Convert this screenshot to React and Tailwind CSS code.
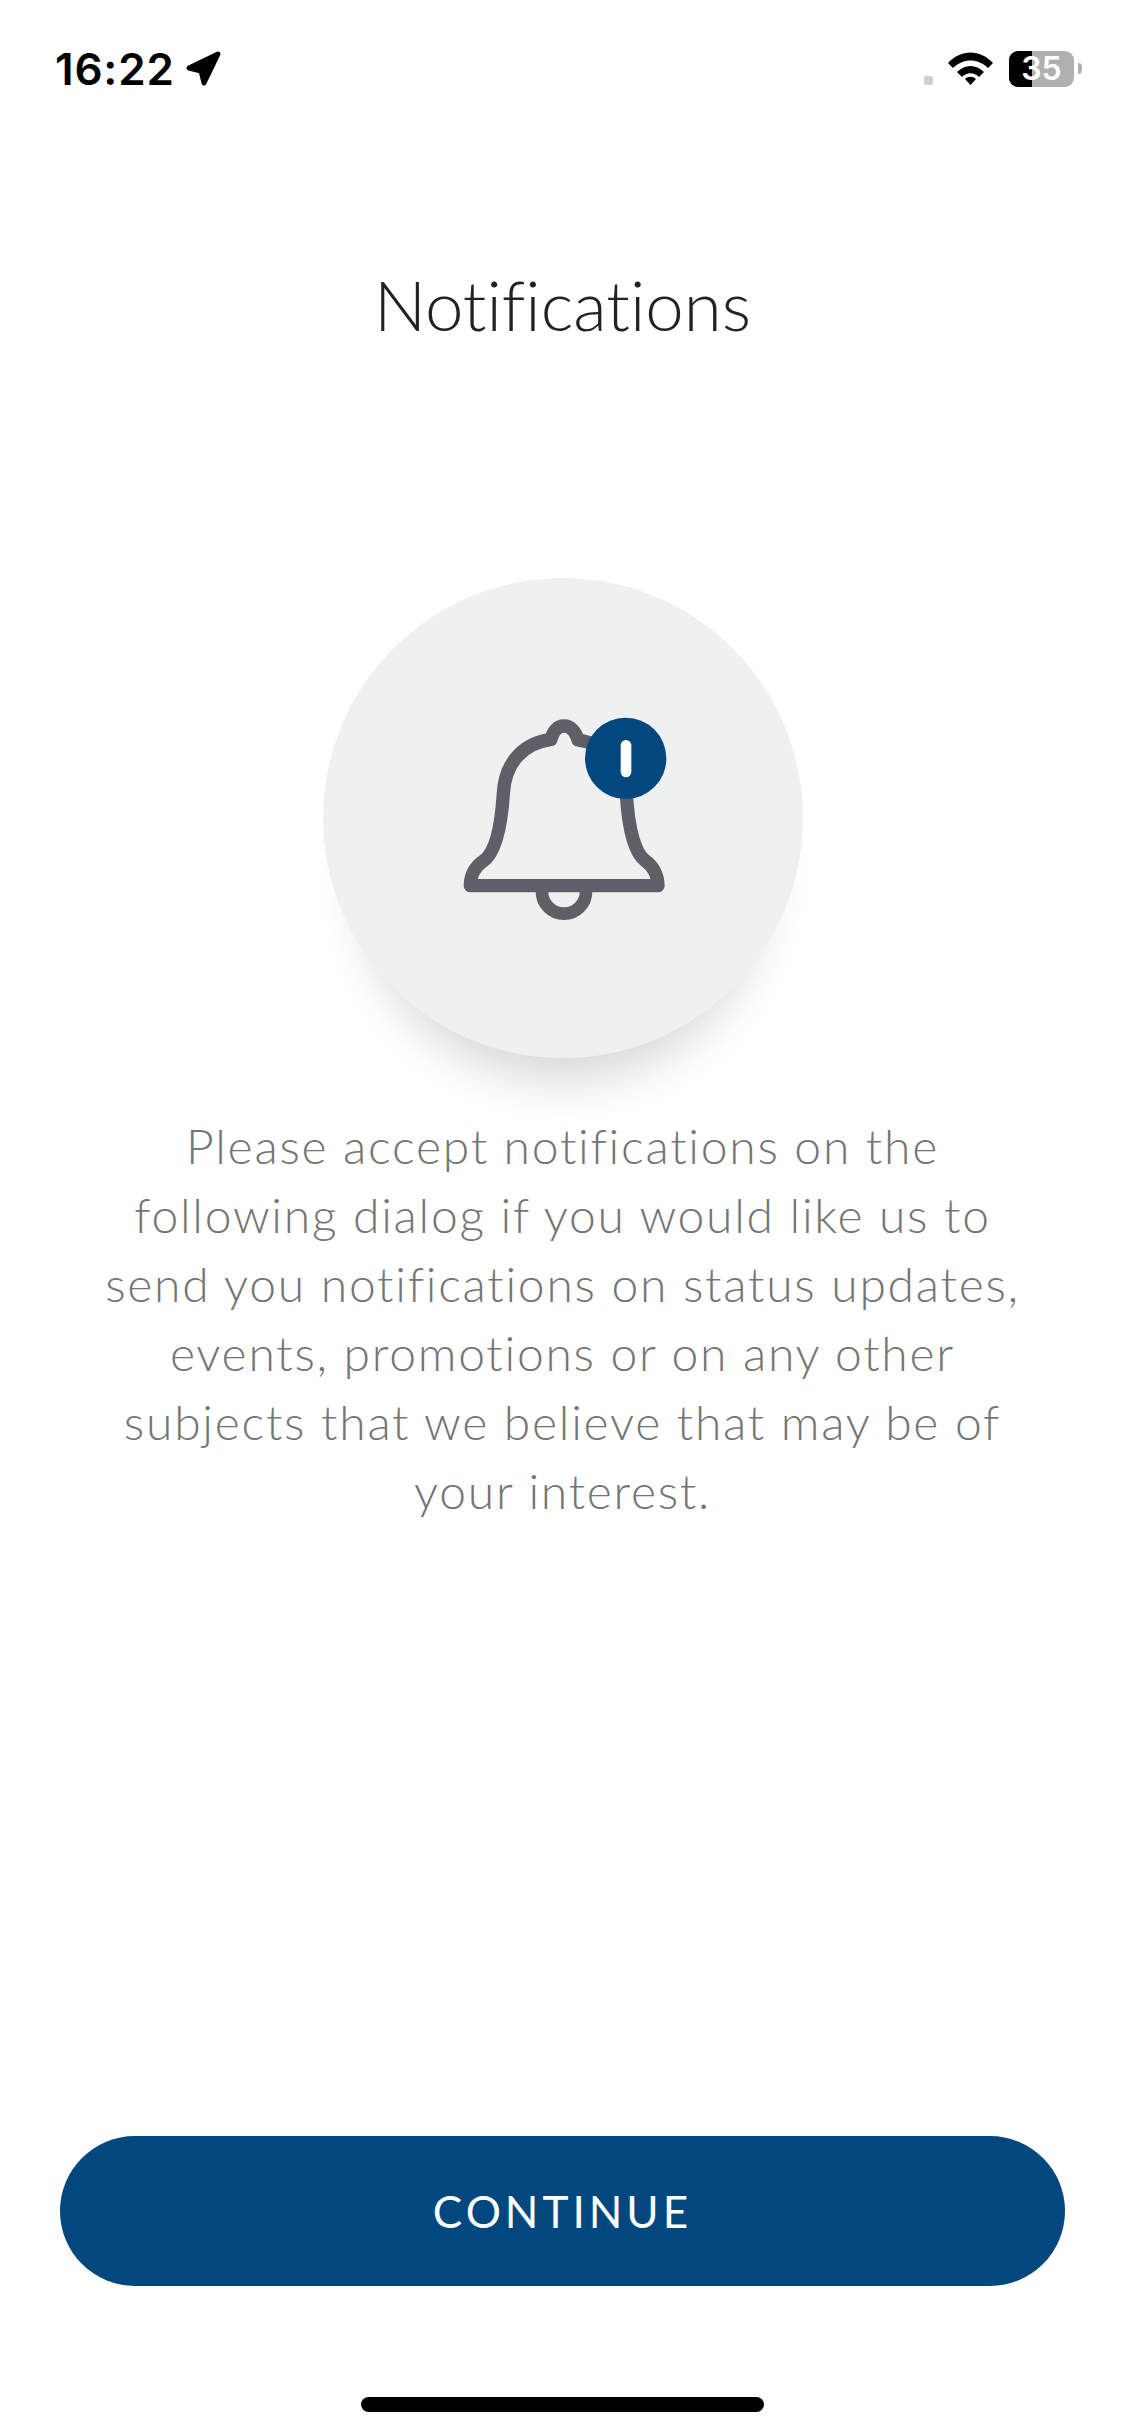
// Notifications permission screen

const COPY_LINES = [
  "Please accept notifications on the",
  "following dialog if you would like us to",
  "send you notifications on status updates,",
  "events, promotions or on any other",
  "subjects that we believe that may be of",
  "your interest.",
];

function StatusBar() {
  return (
    <div className="flex h-[138px] justify-between pl-[55px] pr-[43px] pt-[51px]">
      <div className="flex h-[36px] items-center gap-[10px]">
        <span className="font-['Inter'] text-[44px] font-semibold leading-none tracking-[0.8px] text-black">
          16:22
        </span>
        <svg width="36" height="36" viewBox="0 0 36 36">
          <path
            d="M4 17 L33 3 L19 32 L16 20 Z"
            fill="#000"
            stroke="#000"
            strokeWidth="5"
            strokeLinejoin="round"
          />
        </svg>
      </div>
      <div className="flex h-[36px] items-start">
        <div className="mt-[25px] h-[9px] w-[9px] rounded-[2px] bg-[#cfcfcf]" />
        <svg className="ml-[15px] mt-[1px]" width="45" height="33" viewBox="0 0 45 33">
          <path
            d="M0 11 C13 -3 32 -3 45 11 L40 16 C30 6 15 6 5 16 Z M9 20 C17 12 28 12 36 20 L31 25 C26 20 19 20 14 25 Z M17 27 C20 24 25 24 28 27 L22.5 33 Z"
            fill="#000"
          />
        </svg>
        <div className="relative ml-[16px] flex h-[36px] w-[65px] rounded-[9px] bg-[#b0b0b0]">
          <div className="h-full w-[23px] rounded-l-[9px] bg-black" />
          <span className="absolute inset-0 flex items-center justify-center font-['Inter'] text-[32px] font-semibold leading-none text-white">
            35
          </span>
        </div>
        <div className="ml-[4px] mt-[12px] h-[11px] w-[4px] rounded-r-full bg-[#b0b0b0]" />
      </div>
    </div>
  );
}

function BellIcon() {
  return (
    <svg className="mb-[6px] ml-[2px]" width="270" height="250" viewBox="0 0 810 750">
      <path
        d="M124 587 C124 558 137 530 163 513 C197 490 216 420 223 310 C228 220 280 160 366 148 C372 125 385 108 405 108 C425 108 440 125 447 150 C535 162 588 225 592 310 C598 420 618 490 650 513 C674 530 687 558 687 587 Z"
        fill="none"
        stroke="#5e6068"
        strokeWidth="40"
        strokeLinejoin="round"
      />
      <path
        d="M339 605 A66 66 0 0 0 471 605"
        fill="none"
        stroke="#5e6068"
        strokeWidth="38"
      />
      <circle cx="590" cy="205" r="122" fill="#02487f" />
      <rect x="575" y="150" width="32" height="112" rx="16" fill="#fff" />
    </svg>
  );
}

export default function App() {
  return (
    <div className="flex h-[2436px] w-[1125px] flex-col overflow-hidden bg-white font-['Lato',sans-serif] [font-variant-ligatures:none]">
      <StatusBar />

      <h1 className="mt-[122px] text-center text-[69px] font-light leading-[90px] text-[#222222]">
        Notifications
      </h1>

      {/* Bell in circle */}
      <div className="mx-auto mt-[228px] flex h-[480px] w-[480px] items-center justify-center rounded-full bg-[#eff1f1] shadow-[0_60px_50px_-40px_rgba(0,0,0,0.17)]">
        <BellIcon />
      </div>

      <p className="mt-[53px] text-center text-[48px] font-light leading-[69px] tracking-[1.75px] text-[#757575]">
        {COPY_LINES.map((line) => (
          <span key={line} className="block">
            {line}
          </span>
        ))}
      </p>

      <button
        type="button"
        className="mx-[60px] mt-auto flex h-[150px] items-center justify-center rounded-[75px] bg-[#02487f] text-[44px] font-normal tracking-[4px] text-white"
      >
        CONTINUE
      </button>

      {/* Home indicator */}
      <div className="flex h-[150px] justify-center pt-[111px]">
        <div className="h-[15px] w-[403px] rounded-full bg-black" />
      </div>
    </div>
  );
}
